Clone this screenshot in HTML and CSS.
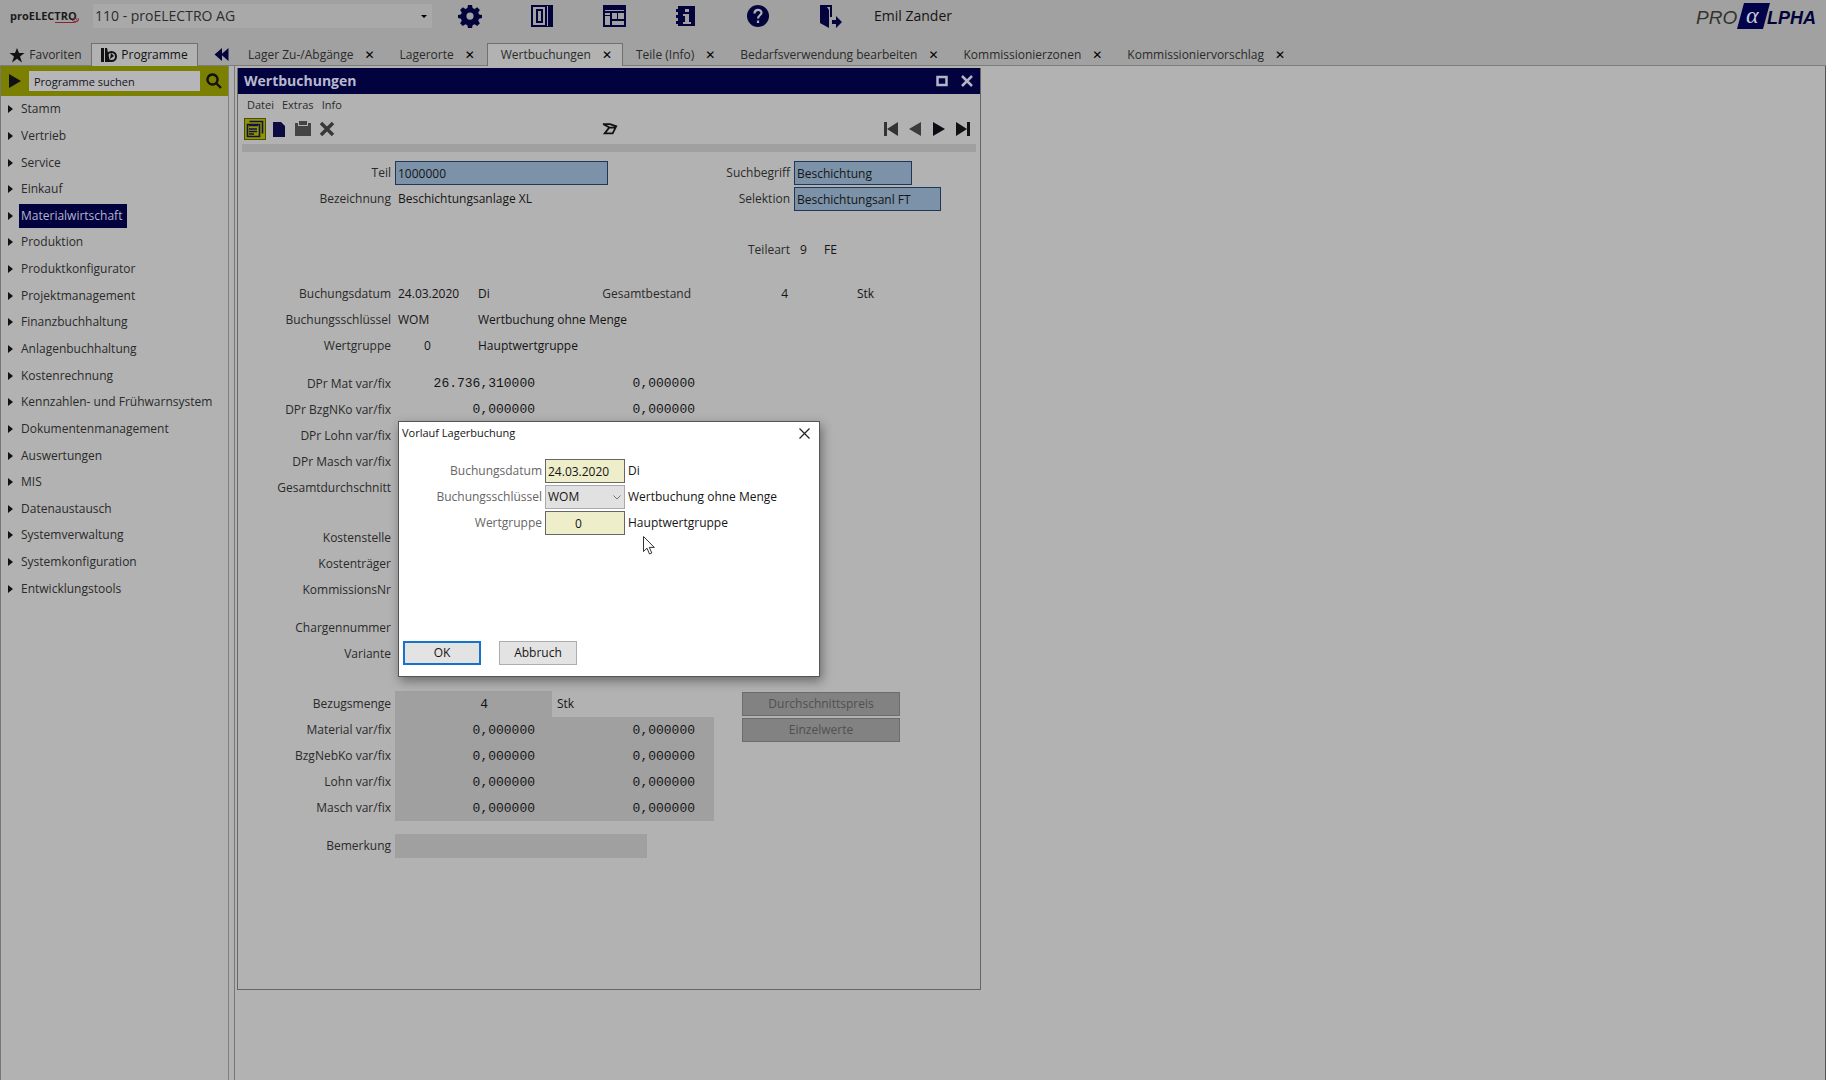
FILE: index.html
```html
<!DOCTYPE html>
<html lang="de">
<head>
<meta charset="utf-8">
<title>Wertbuchungen</title>
<link rel="stylesheet" href="styles.css">
</head>
<body>
<header class="topbar">
  <svg class="brand" viewBox="0 0 72 18" role="img" aria-label="proELECTRO"><text x="0" y="13" class="brand-text">proELECTRO</text><path d="M45 15.500h18c6 0 5-5 0-4M62 13c3 3 8 2 6-2" fill="none" stroke="#8b2430"/></svg>
  <label class="company"><select aria-label="Firma"><option>110 - proELECTRO AG</option></select><svg viewBox="0 0 6 4"><path d="M0 0h6L3 3z"/></svg></label>
  <nav class="tools" aria-label="Werkzeuge">
    <button aria-label="Einstellungen"><svg viewBox="0 0 24 24"><path fill-rule="evenodd" d="M10 1h4l.6 3 2 .9 2.600-1.700 2.700 2.700-1.700 2.600.9 2 3 .6v3l-3 .6-.9 2 1.700 2.600-2.700 2.700-2.600-1.700-2 .9-.6 3h-4l-.6-3-2-.9-2.600 1.700-2.700-2.700 1.700-2.600-.9-2-3-.6v-3l3-.6.9-2-1.700-2.600 2.700-2.700L7.400 4.900l2-.9zM12 8.500a3.600 3.600 0 1 0 0 7.200 3.600 3.600 0 0 0 0-7.200z"/></svg></button>
    <button aria-label="Navigation"><svg viewBox="0 0 24 24"><path fill-rule="evenodd" d="M1 1h22v22H1zM3 3v18h12V3zm3 2h7v14H6zm2 2v10h3V7zM17 2h1v20h-1z"/></svg></button>
    <button aria-label="Layout"><svg viewBox="0 0 24 24"><path fill-rule="evenodd" d="M1 1h23v22H1zM3 6v1h19V6zM3 9v2h5V9zM3 12v9h5v-9zM10 9v6h5V9zM16 9v6h6V9zM10 17v4h12v-4z"/></svg></button>
    <button aria-label="Info"><svg viewBox="0 0 24 24"><path fill-rule="evenodd" d="M4 2h17v20H4v-2H2v-3h2v-3H2v-3h2V8H2V5h2zM11 5v3h4V5zM9 10v2h2v6H9v2h8v-2h-2v-8z"/></svg></button>
    <button aria-label="Hilfe"><svg viewBox="0 0 24 24"><circle cx="12" cy="12" r="11"/><path d="M8.500 9.500c0-5 7-4.500 7-.8 0 2.600-3.500 2.600-3.500 5.800M12 16.500v2.500" fill="none" stroke="#b0b0b8" stroke-width="2.200"/></svg></button>
    <button aria-label="Abmelden"><svg viewBox="0 0 24 24"><path d="M2 1h12v12h-2V3H9l2 3v18l-9-5zM14 16h4v-4l6 6-6 6v-4h-4z"/></svg></button>
  </nav>
  <span class="user">Emil Zander</span>
  <svg class="vendor" viewBox="0 0 122 30" role="img" aria-label="PROALPHA"><path d="M48 2h26l-7 26H41z" fill="#02024a"/><text x="0" y="23" class="v1">PRO</text><text x="50" y="22" class="v2">α</text><text x="71" y="23" class="v3">LPHA</text></svg>
</header>

<div class="tabrow">
  <div class="sidetabs">
    <button class="stab"><svg viewBox="0 0 16 16"><path d="M8 1l2 5h5.500L11 9.500l2 6-5-3.700-5 3.700 2-6L.5 6H6z"/></svg>Favoriten</button>
    <button class="stab active"><svg viewBox="0 0 16 16"><path d="M0 1h3v14H0zM4 1h2l3 14H4z"/><circle cx="10.500" cy="9.500" r="4.500" fill="none" stroke="#111" stroke-width="2"/><path d="M10 6l3 3-4 3z"/></svg>Programme</button>
    <button class="collapse" aria-label="Einklappen"><svg viewBox="0 0 16 14"><path d="M8 0v14L0 7zM15 0v14L7 7z"/></svg></button>
  </div>
  <nav class="maintabs">
    <a href="#" class="tab">Lager Zu-/Abgänge <b>✕</b></a>
    <a href="#" class="tab">Lagerorte <b>✕</b></a>
    <a href="#" class="tab active">Wertbuchungen <b>✕</b></a>
    <a href="#" class="tab">Teile (Info) <b>✕</b></a>
    <a href="#" class="tab">Bedarfsverwendung bearbeiten <b>✕</b></a>
    <a href="#" class="tab">Kommissionierzonen <b>✕</b></a>
    <a href="#" class="tab">Kommissioniervorschlag <b>✕</b></a>
  </nav>
</div>

<div class="body">
  <aside class="sidebar">
    <form class="search">
      <button type="button" aria-label="Start"><svg viewBox="0 0 12 14"><path d="M0 0l12 7-12 7z"/></svg></button>
      <input type="text" value="Programme suchen" aria-label="Programme suchen">
      <button type="button" aria-label="Suchen"><svg viewBox="0 0 16 16"><path d="M6.500 1.500a5 5 0 1 0 .01 0M10 10l5 5" fill="none" stroke="#111" stroke-width="2.400"/></svg></button>
    </form>
    <ul class="tree">
      <li><a href="#">Stamm</a></li>
      <li><a href="#">Vertrieb</a></li>
      <li><a href="#">Service</a></li>
      <li><a href="#">Einkauf</a></li>
      <li><a href="#" class="selected">Materialwirtschaft</a></li>
      <li><a href="#">Produktion</a></li>
      <li><a href="#">Produktkonfigurator</a></li>
      <li><a href="#">Projektmanagement</a></li>
      <li><a href="#">Finanzbuchhaltung</a></li>
      <li><a href="#">Anlagenbuchhaltung</a></li>
      <li><a href="#">Kostenrechnung</a></li>
      <li><a href="#">Kennzahlen- und Frühwarnsystem</a></li>
      <li><a href="#">Dokumentenmanagement</a></li>
      <li><a href="#">Auswertungen</a></li>
      <li><a href="#">MIS</a></li>
      <li><a href="#">Datenaustausch</a></li>
      <li><a href="#">Systemverwaltung</a></li>
      <li><a href="#">Systemkonfiguration</a></li>
      <li><a href="#">Entwicklungstools</a></li>
    </ul>
  </aside>

  <main class="desktop">
    <section class="window">
      <div class="titlebar"><h1>Wertbuchungen</h1>
        <button aria-label="Maximieren"><svg viewBox="0 0 12 12"><path d="M1.500 2h9v8h-9z" fill="none" stroke="#b4b4c8" stroke-width="2.500"/></svg></button>
        <button aria-label="Schließen"><svg viewBox="0 0 12 12"><path d="M1 1l10 10M11 1L1 11" stroke="#b4b4c8" stroke-width="2.500"/></svg></button>
      </div>
      <nav class="menubar"><a href="#">Datei</a><a href="#">Extras</a><a href="#">Info</a></nav>
      <div class="toolbar">
        <button class="on" aria-label="Auswahl"><svg viewBox="0 0 18 18"><path d="M3.500 1.500h13v12M1.500 4.500h12v12h-12zM3 5.500h9M3 9h8M3 11.500h8M3 14h5" fill="none" stroke="#10104a" stroke-width="1.600"/></svg></button>
        <button aria-label="Neu"><svg viewBox="0 0 16 16"><path d="M2 1h8l4 4v11H2z" fill="#0b0b40"/></svg></button>
        <button aria-label="Speichern"><svg viewBox="0 0 16 16"><path d="M0 2h3v3h10V2h3v13H0zM4 0h8v4H4z" fill="#444"/></svg></button>
        <button aria-label="Löschen"><svg viewBox="0 0 16 16"><path d="M2 2l12 12M14 2L2 14" stroke="#383838" stroke-width="3.500"/></svg></button>
        <button class="mid" aria-label="Workflow"><svg viewBox="0 0 18 16"><path d="M1 2.500h8l7 2.500-4 8H3l5-6.500h8M2 3l6 3" fill="none" stroke="#111" stroke-width="2"/></svg></button>
        <button class="nav first" aria-label="Erster"><svg viewBox="0 0 14 14"><path d="M0 0h3v14H0zM14 0v14L3 7z" fill="#333"/></svg></button>
        <button class="nav" aria-label="Zurück"><svg viewBox="0 0 14 14"><path d="M13 0v14L1 7z" fill="#3c3c3c"/></svg></button>
        <button class="nav" aria-label="Weiter"><svg viewBox="0 0 14 14"><path d="M1 0l12 7L1 14z" fill="#0b0b16"/></svg></button>
        <button class="nav" aria-label="Letzter"><svg viewBox="0 0 14 14"><path d="M11 0h3v14h-3zM0 0l11 7L0 14z" fill="#111"/></svg></button>
      </div>
      <form class="form">
        <div class="group head">
          <div class="row"><label for="teil">Teil</label><input id="teil" class="blue teil" value="1000000"><label class="to-e" for="such">Suchbegriff</label><input id="such" class="blue such" value="Beschichtung"></div>
          <div class="row"><span class="lbl">Bezeichnung</span><span class="wide">Beschichtungsanlage XL</span><label class="to-e" for="sel">Selektion</label><input id="sel" class="blue sel" value="Beschichtungsanl FT"></div>
        </div>
        <div class="group type">
          <div class="row"><span class="lbl to-e">Teileart</span><span class="num9">9</span><span>FE</span></div>
        </div>
        <div class="group">
          <div class="row"><span class="lbl">Buchungsdatum</span><span>24.03.2020</span><span>Di</span><span class="lbl total">Gesamtbestand</span><span class="qty">4</span><span class="unit">Stk</span></div>
          <div class="row"><span class="lbl">Buchungsschlüssel</span><span>WOM</span><span class="text">Wertbuchung ohne Menge</span></div>
          <div class="row"><span class="lbl">Wertgruppe</span><span class="zero">0</span><span class="text">Hauptwertgruppe</span></div>
        </div>
        <div class="group wide-gap">
          <div class="row"><span class="lbl">DPr Mat var/fix</span><span class="amount ab">26.736,310000</span><span class="amount">0,000000</span></div>
          <div class="row"><span class="lbl">DPr BzgNKo var/fix</span><span class="amount ab">0,000000</span><span class="amount">0,000000</span></div>
          <div class="row"><span class="lbl">DPr Lohn var/fix</span></div>
          <div class="row"><span class="lbl">DPr Masch var/fix</span></div>
          <div class="row"><span class="lbl">Gesamtdurchschnitt</span></div>
        </div>
        <div class="group">
          <div class="row"><span class="lbl">Kostenstelle</span></div>
          <div class="row"><span class="lbl">Kostenträger</span></div>
          <div class="row"><span class="lbl">KommissionsNr</span></div>
        </div>
        <div class="group wide-gap">
          <div class="row"><span class="lbl">Chargennummer</span></div>
          <div class="row"><span class="lbl">Variante</span></div>
        </div>
        <div class="group">
          <div class="frow"><label for="bez">Bezugsmenge</label><input id="bez" class="gray bez" value="4" readonly><span class="stk">Stk</span><button type="button" class="off" disabled>Durchschnittspreis</button></div>
          <div class="frow"><label for="m1">Material var/fix</label><input id="m1" class="gray n1" value="0,000000" readonly><input class="gray n2" aria-label="Material fix" value="0,000000" readonly><button type="button" class="off" disabled>Einzelwerte</button></div>
          <div class="frow"><label for="m2">BzgNebKo var/fix</label><input id="m2" class="gray n1" value="0,000000" readonly><input class="gray n2" aria-label="BzgNebKo fix" value="0,000000" readonly></div>
          <div class="frow"><label for="m3">Lohn var/fix</label><input id="m3" class="gray n1" value="0,000000" readonly><input class="gray n2" aria-label="Lohn fix" value="0,000000" readonly></div>
          <div class="frow"><label for="m4">Masch var/fix</label><input id="m4" class="gray n1" value="0,000000" readonly><input class="gray n2" aria-label="Masch fix" value="0,000000" readonly></div>
        </div>
        <div class="group">
          <div class="frow"><label for="bem">Bemerkung</label><input id="bem" class="gray bem" readonly></div>
        </div>
      </form>

      <dialog class="dialog" open aria-labelledby="dlg">
        <div class="dtitle"><h2 id="dlg">Vorlauf Lagerbuchung</h2><button aria-label="Schließen"><svg viewBox="0 0 11 11"><path d="M.5.5l10 10M10.500.5l-10 10" stroke="#222" stroke-width="1.200"/></svg></button></div>
        <form class="dform">
          <label for="d1">Buchungsdatum</label><input id="d1" value="24.03.2020"><span>Di</span>
          <label for="d2">Buchungsschlüssel</label><div class="combo"><select id="d2"><option>WOM</option></select><svg viewBox="0 0 8 5"><path d="M.5.5L4 4 7.500.5" fill="none" stroke="#777"/></svg></div><span>Wertbuchung ohne Menge</span>
          <label for="d3">Wertgruppe</label><input id="d3" class="dnum" value="0"><span>Hauptwertgruppe</span>
        </form>
        <div class="dbuttons"><button class="ok">OK</button><button>Abbruch</button></div>
        <svg class="cursor" viewBox="0 0 12 19"><path d="M.5.5v15l3.500-3.300 2.500 5.800 2.300-1-2.500-5.600h5z" fill="#fff" stroke="#333"/></svg>
      </dialog>
    </section>
  </main>
</div>
</body>
</html>
```
FILE: styles.css
```css
* { box-sizing: border-box; }
body {
  margin: 0;
  min-height: 100vh;
  display: flex;
  flex-direction: column;
  background: #b2b2b2;
  color: #151515;
  font: 12px/16px "Open Sans", "Noto Sans", sans-serif;
}
button, input, select { font: inherit; color: inherit; margin: 0; border: 0; border-radius: 0; padding: 0; background: none; }
button { display: flex; align-items: center; justify-content: center; }
a { color: inherit; text-decoration: none; }
svg { display: block; flex: none; }
h1, h2 { margin: 0; font-size: inherit; }

/* top bar */
.topbar { display: flex; align-items: center; height: 43px; padding: 0 8px 11px 10px; background: #a1a1a1; }
.brand { width: 72px; height: 18px; }
.brand-text { font: bold 11px "Open Sans", sans-serif; fill: #1b1b1b; }
.company { position: relative; display: block; width: 339px; margin-left: 11px; }
.company select { width: 100%; height: 24px; padding-left: 2px; appearance: none; background: #a9a9a9; font-size: 14px; color: #2c2c2c; }
.company svg { position: absolute; right: 5px; top: 11px; width: 6px; height: 4px; }
.tools { display: flex; gap: 48px; margin-left: 26px; }
.tools svg { width: 24px; height: 24px; fill: #04043c; }
.user { margin-left: 32px; font-size: 14px; }
.vendor { width: 122px; height: 30px; margin-left: auto; overflow: visible; }
.v1, .v3 { font: italic 19px "Liberation Sans", sans-serif; fill: #333; }
.v3 { fill: #02023a; font-size: 18px; font-weight: bold; }
.v2 { font: italic 24px "Liberation Serif", serif; fill: #c8c8d8; }

/* tabs */
.tabrow { display: flex; height: 23px; background: #a1a1a1; border-bottom: 1px solid #7b7d78; }
.sidetabs { display: flex; width: 235px; flex: none; }
.stab { gap: 4px; height: 23px; width: 91px; color: #2a2a2a; }
.stab svg { width: 16px; height: 16px; fill: #111; }
.stab.active, .tab.active { background: #b2b2b2; border: 1px solid #707070; border-bottom: 0; }
.stab.active { width: 107px; color: #111; }
.collapse { margin-left: 16px; }
.collapse svg { width: 16px; height: 13px; fill: #04043c; }
.maintabs { display: flex; }
.tab { display: flex; align-items: center; gap: 11px; height: 23px; padding: 0 12px 0 13px; color: #2a2a2a; white-space: nowrap; }
.tab.active { padding-right: 10px; }
.tab b { font: bold 12px "DejaVu Sans", sans-serif; color: #000; }

/* body */
.body { flex: 1; display: flex; }
.sidebar { width: 229px; flex: none; border-left: 1px solid #777; border-right: 1px solid #808080; }
.desktop { flex: 1; margin-left: 5px; padding: 2px; border-left: 1px solid #777; border-right: 1px solid #555; }
.search { display: flex; align-items: center; height: 30px; background: #7c8000; }
.search button { width: 28px; height: 30px; }
.search button svg { width: 16px; height: 16px; fill: #111; }
.search button:first-child svg { width: 12px; height: 14px; }
.search input { flex: 1; min-width: 0; height: 20px; padding-left: 5px; background: #b6b6ba; font-size: 11px; }
.tree { display: grid; grid-auto-rows: 1fr; height: 506px; margin: 0; padding: 0 0 0 7px; list-style: none; }
.tree li { display: flex; align-items: center; gap: 6px; }
.tree li::before { content: ""; border: 4px solid transparent; border-left: 5px solid #111; border-right: 0; }
.tree a { height: 24px; padding: 0 5px 0 2px; line-height: 24px; color: #2a2a2a; }
.tree .selected { background: #02023f; color: #b4b4cc; }

/* window */
.window { position: relative; width: 744px; min-height: 922px; border: 1px solid #666; border-top: 0; }
.titlebar { display: flex; align-items: center; gap: 13px; height: 26px; padding: 0 7px 0 6px; background: #02023f; color: #b9b9cc; }
.titlebar h1 { flex: 1; font-size: 14px; }
.titlebar svg { width: 12px; height: 12px; }
.menubar { display: flex; gap: 8px; padding: 3px 9px 0; font-size: 11px; color: #2a2a2a; }
.toolbar { display: flex; align-items: center; gap: 2px; height: 39px; margin: 0 4px; padding: 0 2px; border-bottom: 8px solid #a0a0a0; }
.toolbar button { width: 22px; height: 22px; }
.toolbar svg { width: 16px; height: 16px; }
.toolbar .on { background: #8f9400; border: 1px solid #4a4c00; }
.toolbar .on svg { width: 18px; height: 18px; }
.toolbar .mid { margin-left: 259px; }
.toolbar .nav svg { width: 14px; height: 14px; }
.toolbar .first { margin-left: auto; }

/* form */
.form { display: grid; gap: 12px; padding-top: 8px; }
.row { display: grid; grid-template-columns: 157px 80px 64px 160px 95px 27px 32px 1fr; }
.row, .frow { align-items: center; height: 26px; white-space: nowrap; }
.row > span { padding-left: 3px; }
.row > .lbl, .form label { padding-right: 4px; text-align: right; color: #2a2a2a; }
.blue { height: 24px; padding-left: 2px; background: #7b92a8; border: 1px solid #1f3656; }
.teil { grid-column: 2 / 5; width: 213px; }
.such, .sel { grid-column: 6 / 9; width: 118px; }
.sel { width: 147px; }
.row > .wide { grid-column: 2 / 4; }
.row .to-e { grid-column: 4 / 6; }
.head .row label.to-e { grid-column: 5; }
.type { margin: 13px 0 6px; }
.row > .num9 { padding-left: 6px; }
.row > .total { padding-right: 8px; }
.qty { text-align: right; padding-right: 6px; }
.row > .unit { grid-column: 8; padding-left: 4px; }
.row > .text { grid-column: 3 / 6; }
.row > .zero { padding-left: 29px; }
.amount { text-align: right; padding-right: 4px; font: 13px/16px "Liberation Mono", monospace; }
.ab { grid-column: 2 / 4; }
.wide-gap { margin-bottom: 12px; }
.frow { display: flex; }
.frow label { width: 157px; }
.gray { height: 26px; background: #a0a0a0; text-align: right; font: 13px/16px "Liberation Mono", monospace; }
.bez { width: 157px; padding-right: 64px; }
.stk { width: 162px; padding-left: 5px; }
.n1 { width: 144px; padding-right: 4px; }
.n2 { width: 175px; padding-right: 19px; }
.bem { width: 252px; height: 24px; }
.off { width: 158px; height: 24px; margin-left: 28px; background: #828282; border: 1px solid #6c6c6c; color: #505050; }

/* dialog */
.dialog { position: absolute; left: 160px; top: 353px; width: 422px; height: 256px; margin: 0; padding: 0; display: flex; flex-direction: column; background: #fff; border: 1px solid #555; color: #151515; box-shadow: 2px 4px 10px #0006; }
.dtitle { display: flex; justify-content: space-between; align-items: center; height: 22px; padding: 0 9px 0 3px; }
.dtitle h2 { font-weight: normal; font-size: 11px; }
.dtitle svg { width: 11px; height: 11px; }
.dform { display: grid; grid-template-columns: 142px 80px 1fr; grid-auto-rows: 24px; gap: 2px 3px; padding: 15px 0 0 1px; align-items: center; }
.dform label { text-align: right; color: #666; }
.dform input, .combo select { width: 80px; height: 24px; padding-left: 2px; background: #eeeecb; border: 1px solid #666; }
.dform .dnum { padding-left: 29px; }
.combo { position: relative; }
.combo select { appearance: none; background: #e1e1e1; border-color: #aaa; }
.combo svg { position: absolute; right: 4px; top: 10px; width: 8px; height: 5px; }
.dbuttons { display: flex; gap: 18px; margin-top: auto; padding: 0 0 11px 4px; }
.dbuttons button { width: 78px; height: 24px; background: #e3e3e3; border: 1px solid #adadad; }
.dbuttons .ok { border: 2px solid #1474cc; }
.cursor { position: absolute; left: 244px; top: 114px; width: 12px; height: 19px; }
```
